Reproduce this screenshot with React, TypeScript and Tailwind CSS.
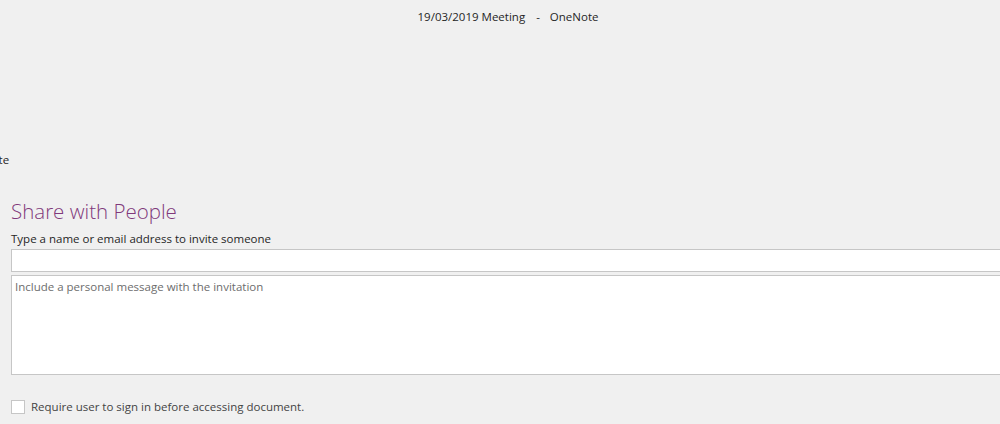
export default function App() {
  return (
    <div
      className="w-[1000px] h-[424px] overflow-hidden bg-[#f0f0f0] text-[#262626]"
      style={{ fontFamily: '"Segoe UI", "Open Sans", "Noto Sans", sans-serif' }}
    >
      {/* Title bar */}
      <div className="h-[33px] flex items-center justify-center text-[11.5px] text-[#262626]">
        <span className="ml-[16px]">19/03/2019 Meeting</span>
        <span className="ml-[11px] mr-[10px]">-</span>
        <span>OneNote</span>
      </div>

      {/* Cut-off backstage tab */}
      <div className="mt-[119px] h-[16px] text-[11.5px] leading-[16px] -ml-[17px]">Note</div>

      {/* Share with People panel */}
      <div className="pl-[11px] pt-[29px]">
        <h1 className="text-[20.5px] leading-[28px] text-[#80397b] font-light">Share with People</h1>
        <label className="block mt-[6px] text-[11.5px] leading-[16px] text-[#262626]">
          Type a name or email address to invite someone
        </label>
        <div className="mt-[2px] w-[1000px] h-[23px] bg-white border border-[#c6c6c6]" />
        <div className="mt-[3px] w-[1000px] h-[100px] bg-white border border-[#c6c6c6] px-[3px] py-[3px] text-[11.5px] leading-[16px] text-[#6d6d6d]">
          Include a personal message with the invitation
        </div>
        <label className="flex items-center mt-[25px] gap-[6px] text-[11.5px] leading-[14px] text-[#444444]">
          <span className="w-[14px] h-[14px] bg-white border border-[#c6c6c6]" />
          Require user to sign in before accessing document.
        </label>
      </div>
    </div>
  )
}
